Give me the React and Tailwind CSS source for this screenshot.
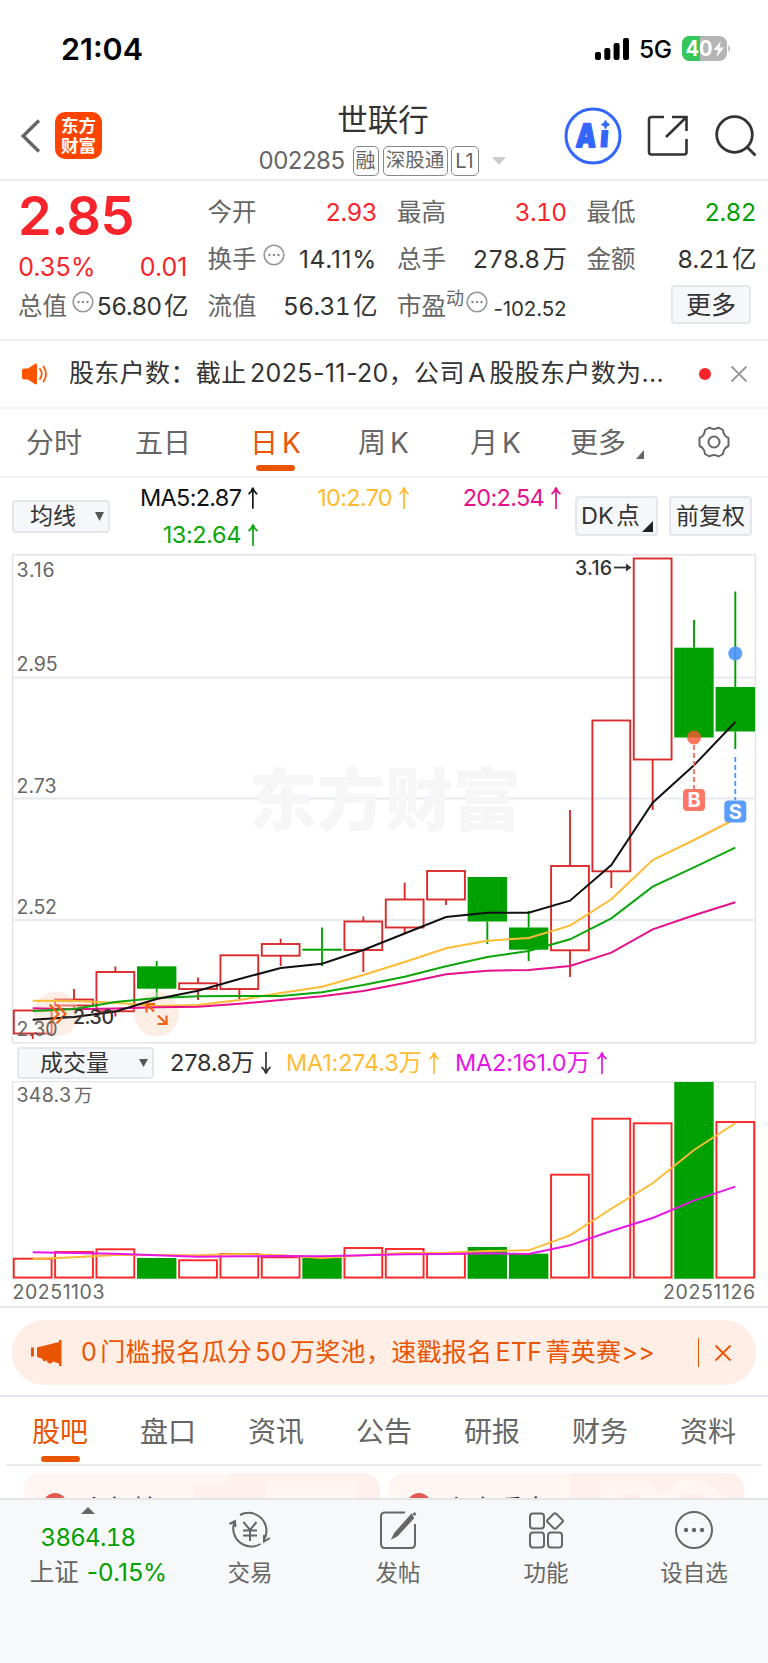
import React, { useState } from "react";
import clsx from "clsx";

const RED = "#d92b2b";
const GREEN = "#00a000";

// body top / bottom, wick high / low
const candles = [
  { top: 1010.5, bottom: 1033.5, high: 1010.5, low: 1039, up: true },
  { top: 999.5, bottom: 1005.5, high: 989, low: 1010, up: true },
  { top: 972, bottom: 1011.3, high: 966.5, low: 1016.5, up: true },
  { top: 966.3, bottom: 988.7, high: 961, low: 997, up: false },
  { top: 983.3, bottom: 989, high: 977.5, low: 1000, up: true },
  { top: 955.3, bottom: 989, high: 955.3, low: 999, up: true },
  { top: 944, bottom: 955.7, high: 938.7, low: 966, up: true },
  { top: 948.7, bottom: 950.7, high: 927.5, low: 966, up: false },
  { top: 921.5, bottom: 950, high: 916.5, low: 972, up: true },
  { top: 899.5, bottom: 927.5, high: 882.7, low: 933, up: true },
  { top: 871, bottom: 899.5, high: 871, low: 905, up: true },
  { top: 877, bottom: 921.5, high: 877, low: 944, up: false },
  { top: 927.5, bottom: 949.7, high: 911, low: 961, up: false },
  { top: 866, bottom: 950.3, high: 810, low: 977, up: true },
  { top: 720.5, bottom: 871.3, high: 720.5, low: 888, up: true },
  { top: 558.5, bottom: 759.5, high: 558.5, low: 810, up: true },
  { top: 647.7, bottom: 737.5, high: 620, low: 737.5, up: false },
  { top: 687, bottom: 731.5, high: 591.5, low: 749, up: false },
];

const priceLines = [
  {
    color: "#ffbb33",
    points: [1000.7, 1001, 1002.7, 1006, 1005, 1000, 993, 986.7, 975, 962, 948.3, 940.7, 938, 925.7, 899.3, 860, 840, 819],
  },
  {
    color: "#e6108c",
    points: [1008.3, 1009.3, 1008.5, 1007.3, 1006.7, 1003.7, 1000, 996.3, 991, 983, 974.3, 970.7, 970, 966, 952.7, 929.3, 915.3, 902.3],
  },
  {
    color: "#0aa60a",
    points: [1011, 1009, 1002, 998, 996.3, 996, 996, 992.3, 985, 976.7, 966.3, 957, 951, 939.3, 918.3, 886.7, 867.3, 847.7],
  },
  {
    color: "#111111",
    points: [1019.7, 1017, 1011.5, 999, 990.7, 979, 968, 963.7, 950, 933.5, 917, 912.7, 912.7, 900.7, 865, 802.7, 765.3, 722],
  },
];

const volumes = [
  1258.7, 1252, 1249.3, 1258, 1260.3, 1254, 1257.3, 1258, 1248, 1249, 1253.7, 1247, 1253.7, 1174.7, 1118.7, 1123.3, 1082, 1122,
];
const volumeDown = [3, 7, 11, 12, 16];

const volumeLines = [
  {
    color: "#ffbb33",
    points: [1259, 1257.3, 1255, 1255, 1255.3, 1254, 1255.3, 1258, 1255.3, 1253, 1252.7, 1251, 1250.3, 1235.3, 1208.7, 1183.3, 1150, 1123.3],
  },
  {
    color: "#e617e6",
    points: [1252.3, 1253, 1253.7, 1255.3, 1256.7, 1256.3, 1256, 1256.3, 1255.3, 1254.3, 1254, 1253.3, 1254, 1245.3, 1231, 1218, 1200.7, 1186.7],
  },
];

const centerX = (i) => 32.7 + i * 41.33;
const toPoints = (ys) => ys.map((y, i) => `${centerX(i)},${y}`).join(" ");

const Dots = ({ className }) => (
  <svg viewBox="0 0 22 22" className={clsx("h-[22px] w-[22px] shrink-0", className)}>
    <circle cx="11" cy="11" r="9.8" fill="none" stroke="#999" strokeWidth="1.6" />
    <circle cx="6.5" cy="11" r="1.2" fill="#888" />
    <circle cx="11" cy="11" r="1.2" fill="#888" />
    <circle cx="15.5" cy="11" r="1.2" fill="#888" />
  </svg>
);

const StatusBar = () => (
  <div className="flex h-[96px] items-start justify-between pl-[61px] pr-[36px] pt-[31px]">
    <span className="text-[30.5px] font-semibold leading-[36px] text-black">21:04</span>
    <div className="flex h-[36px] items-center">
      <svg viewBox="0 0 34 24" className="h-[24px] w-[34px]">
        <rect x="0" y="15" width="6" height="8" rx="2" />
        <rect x="9.3" y="11" width="6" height="12" rx="2" />
        <rect x="18.6" y="6" width="6" height="17" rx="2" />
        <rect x="28" y="1" width="6" height="22" rx="2" />
      </svg>
      <span className="ml-[10px] w-[33px] text-[24.5px] font-medium leading-[36px] tracking-[-0.5px] text-black">5G</span>
      <svg viewBox="0 0 50 26" className="ml-[10px] h-[26px] w-[50px]">
        <defs>
          <clipPath id="battery">
            <rect width="45" height="25" rx="7.5" />
          </clipPath>
        </defs>
        <g clipPath="url(#battery)">
          <rect width="45" height="25" fill="#b5b5b5" />
          <rect width="18" height="25" fill="#34c759" />
        </g>
        <path d="M46.5 9 Q49.5 12.5 46.5 16.5 Z" fill="#a5a5a5" />
        <text x="3.5" y="20" fontSize="21" fontWeight="700" fill="#fff" textLength="27" lengthAdjust="spacingAndGlyphs">
          40
        </text>
        <path d="M39 5 L31.5 14 H36 L34.5 21 L42 11.5 H37.3 Z" fill="#fff" />
      </svg>
    </div>
  </div>
);

const Header = () => (
  <header className="flex h-[85px] border-b-2 border-[#ededed]">
    <div className="flex w-[200px] items-start pl-[20px] pt-[16px]">
      <svg viewBox="0 0 22 36" className="mt-[6px] h-[36px] w-[22px]" fill="none" stroke="#666" strokeWidth="3.4">
        <path d="M19 2.5 L3.2 18 L19 33.5" />
      </svg>
      <div className="ml-[13px] flex h-[47px] w-[47px] flex-col items-center justify-center rounded-[10px] bg-[#ff4400] text-[17.5px] font-bold leading-[20px] text-white">
        <span>东方</span>
        <span>财富</span>
      </div>
    </div>
    <div className="flex flex-1 flex-col items-center">
      <h1 className="ml-[2px] mt-[5px] text-[30.5px] leading-[38px] text-[#333]">世联行</h1>
      <div className="mt-[7px] flex h-[30px] items-center text-[#666]">
        <span className="mr-[8px] text-[24px] leading-[30px] tracking-[-0.5px]">002285</span>
        <span className="mr-[4px] flex h-[30px] w-[26px] items-center justify-center rounded-[5px] border-[1.5px] border-[#888] text-[20px]">融</span>
        <span className="mr-[3px] flex h-[30px] w-[65px] items-center justify-center whitespace-nowrap rounded-[5px] border-[1.5px] border-[#888] text-[19.5px]">
          深股通
        </span>
        <span className="mr-[13px] flex h-[30px] w-[28px] items-center justify-center rounded-[5px] border-[1.5px] border-[#888] text-[20px]">L1</span>
        <svg viewBox="0 0 14 8" className="h-[8px] w-[14px]">
          <path d="M0 0 H14 L7 8 Z" fill="#ccc" />
        </svg>
      </div>
    </div>
    <div className="flex w-[204px] items-start pt-[11px]">
      <svg viewBox="0 0 58 58" className="h-[58px] w-[58px]">
        <circle cx="29" cy="29" r="27" fill="none" stroke="#3366ff" strokeWidth="3" />
        <g fill="#3366ff" stroke="#3366ff">
          <text transform="translate(11.5 40) skewX(-4)" fontSize="32" fontWeight="900" strokeWidth="1.8" strokeLinejoin="round" textLength="20" lengthAdjust="spacingAndGlyphs">
            A
          </text>
          <text transform="translate(35.5 40) skewX(-4)" fontSize="30" fontWeight="900" strokeWidth="1.2" textLength="8.5" lengthAdjust="spacingAndGlyphs">
            ı
          </text>
          <path d="M41.5 12.8 Q42.4 16.6 46 17.5 Q42.4 18.4 41.5 22.2 Q40.6 18.4 37 17.5 Q40.6 16.6 41.5 12.8 Z" strokeWidth="0.6" />
        </g>
      </svg>
      <svg viewBox="0 0 42 42" className="ml-[25px] mt-[8px] h-[42px] w-[42px]" fill="none" stroke="#333" strokeWidth="2.6">
        <path d="M17 2 H4.5 Q2 2 2 4.5 V37 Q2 39.5 4.5 39.5 H37 Q39.5 39.5 39.5 37 V24" />
        <path d="M25 2 H39.5 V16 M39 2.5 L19 22" />
      </svg>
      <svg viewBox="0 0 42 42" className="ml-[26px] mt-[8px] h-[42px] w-[42px]" fill="none" stroke="#333" strokeWidth="2.8">
        <circle cx="19.5" cy="19.5" r="17.8" />
        <path d="M32 32 L40.5 40.5" />
      </svg>
    </div>
  </header>
);

const QuoteCell = ({ label, extra, value, unit, valueClass, spacing }) => (
  <div className="flex h-[47px] items-center justify-between">
    <span className="flex shrink-0 items-center whitespace-nowrap text-[24.5px] text-[#666]">
      {label}
      {extra}
    </span>
    <span
      className={clsx(
        "flex gap-[3px] whitespace-nowrap text-[24.5px]",
        valueClass || "text-[#333]",
        spacing || "tabular-nums tracking-[-0.6px]"
      )}
    >
      {value}
      {unit && <span>{unit}</span>}
    </span>
  </div>
);

const Quote = () => (
  <section className="grid h-[160px] grid-cols-4 gap-x-[20px] border-b-2 border-[#f2f2f2] pl-[18px] pr-[12px] pt-[8px]">
    <div>
      <div className="h-[54px] text-[54px] font-semibold leading-[54px] tracking-[-0.5px] text-[#f8232b]">2.85</div>
      <div className="flex h-[48px] items-center justify-between text-[25px] leading-[48px] text-[#f8232b]">
        <span className="tabular-nums tracking-[-0.6px]">0.35%</span>
        <span>0.01</span>
      </div>
      <div className="-mt-[8px]">
        <QuoteCell label="总值" extra={<Dots className="mb-[9px] ml-[5px]" />} value="56.80" unit="亿" spacing="tabular-nums tracking-[-1.1px]" />
      </div>
    </div>
    <div>
      <QuoteCell label="今开" value="2.93" valueClass="text-[#f8232b]" />
      <QuoteCell label="换手" extra={<Dots className="mb-[9px] ml-[6px]" />} value="14.11%" spacing="tracking-[0.7px]" />
      <QuoteCell label="流值" value="56.31" unit="亿" />
    </div>
    <div>
      <QuoteCell label="最高" value="3.10" valueClass="text-[#f8232b]" />
      <QuoteCell label="总手" value="278.8" unit="万" />
      <div className="flex h-[47px] items-center justify-between">
        <span className="flex shrink-0 items-center whitespace-nowrap text-[24.5px] text-[#666]">
          市盈
          <span className="mb-[16px] text-[18px]">动</span>
          <Dots className="mb-[9px] ml-[2px]" />
        </span>
        <span className="mt-[5px] whitespace-nowrap text-[20.5px] tracking-[-0.1px] text-[#333]">-102.52</span>
      </div>
    </div>
    <div>
      <QuoteCell label="最低" value="2.82" valueClass="text-[#00a000]" />
      <QuoteCell label="金额" value="8.21" unit="亿" />
      <div className="flex justify-end pr-[5px] pt-[2px]">
        <button className="h-[39px] w-[80px] rounded-[4px] border-2 border-[#e3e6ec] bg-[#f6f7fa] text-[25px] leading-[36px] text-[#333]">
          更多
        </button>
      </div>
    </div>
  </section>
);

const Notice = () => (
  <section className="flex h-[68px] items-center border-b-2 border-[#f2f2f2] pl-[22px] pr-[20px]">
    <svg viewBox="0 0 26 22" className="h-[22px] w-[26px]">
      <path d="M0 7.5 Q0 5.5 2 5.5 H6 L13 0.8 Q15 0 15 2 V20 Q15 22 13 21.2 L6 16.5 H2 Q0 16.5 0 14.5 Z" fill="#ff5500" />
      <path d="M18 6 Q21.5 11 18 16 M21.5 3.5 Q26.5 11 21.5 18.5" fill="none" stroke="#ff5500" strokeWidth="1.8" strokeLinecap="round" />
    </svg>
    <span className="ml-[21px] w-[610px] whitespace-nowrap text-[25px] tracking-[0.37px] text-[#333] [word-spacing:-4px]">
      股东户数：截止 2025-11-20，公司 A 股股东户数为...
    </span>
    <span className="ml-[20px] h-[12px] w-[12px] rounded-full bg-[#f8232b]" />
    <svg viewBox="0 0 18 18" className="ml-auto h-[18px] w-[18px]" stroke="#999" strokeWidth="1.8">
      <path d="M1.5 1.5 L16.5 16.5 M16.5 1.5 L1.5 16.5" />
    </svg>
  </section>
);

const periods = [
  { name: "分时", width: "w-[109px]" },
  { name: "五日", width: "w-[115px]" },
  { name: "日 K", width: "w-[108px]" },
  { name: "周 K", width: "w-[112px]" },
  { name: "月 K", width: "w-[100px]" },
];

const PeriodTabs = () => {
  const [active, setActive] = useState("日 K");

  return (
    <nav className="flex h-[69px] items-start border-b-2 border-[#f2f2f2] pl-[26px] text-[28px] text-[#666]">
      {periods.map((p) => (
        <button key={p.name} onClick={() => setActive(p.name)} className={clsx("flex pt-[14px]", p.width)}>
          <span className="flex flex-col items-center">
            <span
              className={clsx("whitespace-nowrap leading-[40px] [word-spacing:-4px]", active === p.name && "text-[#ea5504]")}
            >
              {p.name}
            </span>
            {active === p.name && <span className="mt-[2px] h-[6px] w-[39px] rounded-[3px] bg-[#ea5504]" />}
          </span>
        </button>
      ))}
      <button className="flex items-end pt-[14px] leading-[40px]">
        更多
        <svg viewBox="0 0 8 9" className="mb-[4px] ml-[10px] h-[9px] w-[8px]">
          <path d="M8 0 V9 H0 Z" fill="#666" />
        </svg>
      </button>
      <svg viewBox="0 0 32 32" className="ml-[54px] mt-[17px] h-[32px] w-[32px]" fill="none" stroke="#666" strokeWidth="2" strokeLinejoin="round">
        <path d="M11.5 1.5 Q13.5 3 16 3 Q18.5 3 20.5 1.5 L25 4 Q25.2 6.8 26.5 8.7 Q27.8 10.8 30.5 12 V20 Q27.8 21.2 26.5 23.3 Q25.2 25.2 25 28 L20.5 30.5 Q18.5 29 16 29 Q13.5 29 11.5 30.5 L7 28 Q6.8 25.2 5.5 23.3 Q4.2 21.2 1.5 20 V12 Q4.2 10.8 5.5 8.7 Q6.8 6.8 7 4 Z" />
        <circle cx="16" cy="16" r="5.5" />
      </svg>
    </nav>
  );
};

const Arrow = ({ down }) => (
  <svg viewBox="0 0 12 24" className={clsx("ml-[6px] h-[24px] w-[12px]", down && "rotate-180")} fill="none" stroke="currentColor" strokeWidth="1.7">
    <path d="M6 23 V2 M1.5 8 Q5 5.5 6 1.5 Q7 5.5 10.5 8" />
  </svg>
);

const Average = ({ text, className, down }) => (
  <span className={clsx("flex items-center whitespace-nowrap text-[23.5px] leading-[36px]", className)}>
    {text}
    <Arrow down={down} />
  </span>
);

const AverageBar = () => (
  <section className="flex h-[76px] items-start pl-[12px] pr-[16px]">
    <button className="mt-[22px] flex h-[33px] w-[98px] items-center justify-between rounded-[4px] border-2 border-[#e3e6ec] bg-[#f6f7fa] pl-[16px] pr-[4px] text-[23px] text-[#333]">
      均线
      <svg viewBox="0 0 9 9" className="h-[9px] w-[9px]">
        <path d="M0 0 H9 L4.5 9 Z" fill="#555" />
      </svg>
    </button>
    <div className="ml-[30px] mt-[2px] grid w-[423px] grid-cols-[119px_151px_152px] tracking-[-0.7px]">
      <Average text="MA5:2.87" className="justify-end text-[#111]" />
      <Average text="10:2.70" className="justify-end text-[#ffbb33]" />
      <Average text="20:2.54" className="justify-end text-[#e6108c]" />
      <Average text="13:2.64" className="h-[38px] justify-end tracking-[-0.4px] text-[#0aa60a]" />
    </div>
    <button className="ml-auto mt-[18px] flex h-[40px] w-[83px] shrink-0 items-end justify-between rounded-[4px] border-2 border-[#e3e6ec] bg-[#f6f7fa] pl-[4px] text-[23.5px] leading-[37px] text-[#333]">
      <span className="whitespace-nowrap [word-spacing:-4px]">DK 点</span>
      <svg viewBox="0 0 11 11" className="-ml-[4px] mb-[2px] mr-[3px] h-[11px] w-[11px] shrink-0">
        <path d="M11 0 V11 H0 Z" fill="#222" />
      </svg>
    </button>
    <button className="ml-[11px] mt-[18px] h-[40px] w-[83px] shrink-0 rounded-[4px] border-2 border-[#e3e6ec] bg-[#f6f7fa] text-[23px] leading-[37px] text-[#333]">
      前复权
    </button>
  </section>
);

const PriceChart = () => (
  <svg viewBox="0 554 768 490" className="block h-[490px] w-full">
    <rect x="12.5" y="554.8" width="743" height="488" fill="none" stroke="#e2e3e8" strokeWidth="1.5" />
    {[677.5, 798.5, 920].map((y) => (
      <line key={y} x1="12.5" x2="755.5" y1={y} y2={y} stroke="#e6eaf0" strokeWidth="2" />
    ))}
    <text x="249" y="825" fontSize="68" fontWeight="900" fill="#f6f6f6" textLength="272">
      东方财富
    </text>

    {candles.map((c, i) => {
      const x = centerX(i);
      const color = c.up ? RED : GREEN;
      return (
        <g key={i} stroke={color} strokeWidth="1.9">
          <line x1={x} x2={x} y1={c.high} y2={c.top} />
          <line x1={x} x2={x} y1={c.bottom} y2={c.low} />
          {c.up ? (
            <rect x={x - 18.9} y={c.top} width="37.8" height={c.bottom - c.top} fill="none" />
          ) : (
            <rect x={x - 19.7} y={c.top} width="39.4" height={c.bottom - c.top} fill={color} stroke="none" />
          )}
        </g>
      );
    })}

    {/* expand / fullscreen handles, translucent over the candles */}
    <circle cx="56" cy="1014" r="22.5" fill="#fbd9c6" fillOpacity="0.45" />
    <circle cx="156.5" cy="1014" r="22.5" fill="#fbd9c6" fillOpacity="0.45" />

    {priceLines.map((line) => (
      <polyline key={line.color} points={toPoints(line.points)} fill="none" stroke={line.color} strokeWidth="2" />
    ))}

    <g fill="none" stroke="#f26010" strokeWidth="2.2">
      <path d="M49.5 1004.5 L58.5 1014 L49.5 1023.5 M56.5 1004.5 L65.5 1014 L56.5 1023.5" />
      <path d="M155 1004 H146.5 V1012.5 M147 1004.5 L154 1011.5 M158 1015.5 L166 1023.5 M157.5 1024 H166.5 V1015.5" />
    </g>

    <g fontSize="19.5" fill="#666">
      <text x="16.5" y="576.5" textLength="38">3.16</text>
      <text x="16.5" y="671" textLength="41">2.95</text>
      <text x="16.5" y="793" textLength="40">2.73</text>
      <text x="16.5" y="914" textLength="40.5">2.52</text>
      <text x="16.5" y="1035.5" textLength="41">2.30</text>
    </g>

    <g fontSize="19.5" fontWeight="500" fill="#333">
      <text x="575" y="574.5" textLength="37">3.16</text>
      <text x="73" y="1024" textLength="41">2.30</text>
    </g>
    <path d="M614 567.5 H629" stroke="#333" strokeWidth="1.8" />
    <path d="M626 563.5 L631.5 567.5 L626 571.5 Z" fill="#333" />
    <path d="M62 1017 H72" stroke="#333" strokeWidth="1.8" />

    <line x1="694" x2="694" y1="745" y2="789" stroke="#ff6b5b" strokeWidth="1.8" strokeDasharray="5 3" />
    <circle cx="694" cy="737.5" r="7" fill="#ff5533" fillOpacity="0.8" />
    <rect x="683" y="789" width="22" height="22" rx="4" fill="#ff7766" />
    <text x="694" y="807" fontSize="20" fontWeight="700" fill="#fff" textAnchor="middle">B</text>

    <line x1="735.3" x2="735.3" y1="757" y2="800" stroke="#4d94ff" strokeWidth="1.8" strokeDasharray="5 3" />
    <circle cx="735.3" cy="653.5" r="7" fill="#4d94ff" fillOpacity="0.9" />
    <rect x="724.3" y="800.5" width="22" height="22" rx="4" fill="#5a9dff" />
    <text x="735.3" y="818.5" fontSize="20" fontWeight="700" fill="#fff" textAnchor="middle">S</text>
  </svg>
);

const VolumeBar = () => (
  <section className="flex h-[37px] items-center pl-[17px] pt-[1px]">
    <button className="flex h-[32px] w-[137px] items-center justify-between rounded-[4px] border-2 border-[#e3e6ec] bg-[#f6f7fa] pl-[21px] pr-[4px] text-[23px] text-[#333]">
      成交量
      <svg viewBox="0 0 9 8" className="h-[8px] w-[9px]">
        <path d="M0 0 H9 L4.5 8 Z" fill="#555" />
      </svg>
    </button>
    <Average text="278.8万" className="ml-[16px] w-[116px] tracking-[-0.2px] text-[#333]" down />
    <Average text="MA1:274.3万" className="w-[169px] tracking-[-0.2px] text-[#ffbb33]" />
    <Average text="MA2:161.0万" className="tracking-[-0.2px] text-[#e617e6]" />
  </section>
);

const VolumeChart = () => (
  <div className="h-[227px] border-b-2 border-[#e8e8ea]">
    <svg viewBox="0 1081 768 225" className="block h-[225px] w-full">
      <rect x="12.5" y="1081.7" width="743" height="197" fill="none" stroke="#e2e3e8" strokeWidth="1.2" />
      {volumes.map((y, i) =>
        volumeDown.includes(i) ? (
          <rect key={i} x={centerX(i) - 19.7} y={y} width="39.4" height={1278.7 - y} fill={GREEN} />
        ) : (
          <rect key={i} x={centerX(i) - 18.9} y={y} width="37.8" height={1277.5 - y} fill="none" stroke="#fb2626" strokeWidth="1.9" />
        )
      )}
      {volumeLines.map((line) => (
        <polyline key={line.color} points={toPoints(line.points)} fill="none" stroke={line.color} strokeWidth="1.9" />
      ))}
      <g fontSize="19.5" fill="#666">
        <text x="16.5" y="1101.5" textLength="54.5">348.3</text>
        <text x="74" y="1101.5" fontSize="18.5">万</text>
        <text x="12.5" y="1299" textLength="92">20251103</text>
        <text x="663" y="1299" textLength="92">20251126</text>
      </g>
    </svg>
  </div>
);

const Banner = () => (
  <section className="h-[89px] border-b-2 border-[#e6e6ec] px-[12px] pt-[12px]">
    <div className="flex h-[65px] items-center rounded-[32px] bg-[#feeee6] pl-[19px] pr-[24px] text-[#ea5504]">
      <svg viewBox="0 0 31 26" className="h-[26px] w-[31px]" fill="#ea5504">
        <rect x="0" y="7.5" width="3" height="9" />
        <path d="M6 7.5 L28 2 V0 H30.5 V26 H28 V23.5 L22 21.5 Q20 25 16.5 22.5 L15.5 20 Q13 23 11 18.5 L6 17 Z" />
      </svg>
      <span className="ml-[19px] whitespace-nowrap text-[25px] tracking-[0.27px] [word-spacing:-4px]">
        0 门槛报名瓜分 50 万奖池，速戳报名 ETF 菁英赛&gt;&gt;
      </span>
      <span className="ml-auto mr-[15px] h-[29px] w-[1.5px] bg-[#ea5504]" />
      <svg viewBox="0 0 18 18" className="h-[18px] w-[18px]" stroke="#ea5504" strokeWidth="1.8">
        <path d="M1.5 1.5 L16.5 16.5 M16.5 1.5 L1.5 16.5" />
      </svg>
    </div>
  </section>
);

const sections = ["股吧", "盘口", "资讯", "公告", "研报", "财务", "资料"];

const SectionTabs = () => {
  const [active, setActive] = useState("股吧");

  return (
    <nav className="mx-[6px] flex h-[69px] items-start justify-between border-b-2 border-[#ececec] pl-[26px] pr-[26px] text-[28px] text-[#666]">
      {sections.map((name) => (
        <button key={name} onClick={() => setActive(name)} className="flex flex-col items-center pt-[15px]">
          <span className={clsx("leading-[40px]", active === name && "text-[#ea5504]")}>{name}</span>
          {active === name && <span className="mt-[4px] h-[6px] w-[39px] rounded-[3px] bg-[#ea5504]" />}
        </button>
      ))}
    </nav>
  );
};

const HotCard = ({ title, children }) => (
  <div className="relative h-[90px] flex-1 overflow-hidden rounded-[16px] bg-[#fff6f4]">
    <svg viewBox="0 0 356 90" className="absolute inset-0 h-full w-full">
      {children}
    </svg>
    <div className="relative flex items-start pl-[19px] pt-[19px]">
      <span className="mt-[1px] h-[24px] w-[24px] rounded-full bg-[#e05a52]" />
      <span className="ml-[14px] text-[26px] leading-[36px] text-[#222]">{title}</span>
    </div>
  </div>
);

const Cards = () => (
  <section className="flex h-[32px] gap-[8px] overflow-hidden px-[24px] pt-[7px]">
    <HotCard title="人气榜">
      <path d="M205 0 H356 V90 H170 V12 H205 Z" fill="#fff0ee" />
      <rect x="242" y="8" width="90" height="82" fill="#fff6f4" />
    </HotCard>
    <HotCard title="主力看盘">
      <path d="M182 0 H356 V90 H182 Z" fill="#fff0ee" />
      <path d="M213 8 H258 L275 22 L290 8 Q325 2 342 32 L330 90 H213 Z" fill="#fff6f4" />
      <path d="M233 22 H251 V60 H233 Z M288 25 Q300 18 318 24 V50 H288 Z" fill="#ffecea" />
    </HotCard>
  </section>
);

const NavItem = ({ label, children }) => (
  <button className="flex flex-1 flex-col items-center pt-[10px]">
    <svg viewBox="0 0 42 40" className="h-[40px] w-[42px]" fill="none" stroke="#666" strokeWidth="2">
      {children}
    </svg>
    <span className="mt-[6px] text-[22.5px] leading-[34px] text-[#666]">{label}</span>
  </button>
);

const BottomBar = () => (
  <footer className="flex h-[165px] border-t-2 border-[#e4e5e7] bg-[#f7f8fa]">
    <div className="flex w-[176px] flex-col items-center pt-[7px]">
      <svg viewBox="0 0 14 7" className="h-[7px] w-[14px]">
        <path d="M7 0 L14 7 H0 Z" fill="#666" />
      </svg>
      <span className="mt-[8px] text-[24px] leading-[32px] tabular-nums tracking-[-0.7px] text-[#00a000]">3864.18</span>
      <span className="mt-[1px] flex gap-[8px] pl-[21px] text-[24.5px] leading-[34px] text-[#666]">
        上证
        <span className="tracking-[0.1px] text-[#00a000]">-0.15%</span>
      </span>
    </div>
    <NavItem label="交易">
      <path d="M11 5 A18 18 0 0 1 35 30 M31.5 34 A18 18 0 0 1 5.5 12" />
      <path d="M0.5 14 L6 11 L6.5 17 M35 25 V31.5 L41 28" />
      <path d="M14.5 12 L21 20 L27.5 12 M21 20 V31 M14 20.5 H28 M14 25.5 H28" />
    </NavItem>
    <NavItem label="发帖">
      <path d="M28 2.5 H8 Q4 2.5 4 6.5 V34 Q4 38 8 38 H34 Q38 38 38 34 V14" />
      <path d="M34.5 5 L18 23.5 L16 27.5 L20 25.5 L36 8 Z" fill="#666" />
      <path d="M36.5 3 L38.5 5" strokeWidth="3" />
    </NavItem>
    <NavItem label="功能">
      <rect x="5" y="3.5" width="14" height="15" rx="3" />
      <rect x="5" y="22.5" width="14" height="15" rx="3" />
      <rect x="23" y="22.5" width="14" height="15" rx="3" />
      <path d="M28.5 4 Q30 2.5 31.5 4 L37.5 10 Q38.5 11 37.5 12 L31.5 18 Q30 19.5 28.5 18 L22.5 12 Q21.5 11 22.5 10 Z" />
    </NavItem>
    <NavItem label="设自选">
      <circle cx="21" cy="20" r="18" />
      <g fill="#666" stroke="none">
        <circle cx="13" cy="20" r="2.2" />
        <circle cx="21" cy="20" r="2.2" />
        <circle cx="29" cy="20" r="2.2" />
      </g>
    </NavItem>
  </footer>
);

const App = () => {
  return (
    <div className="h-[1663px] w-[768px] overflow-hidden bg-white font-['Inter','Noto_Sans_CJK_SC',sans-serif]">
      <StatusBar />
      <Header />
      <Quote />
      <Notice />
      <PeriodTabs />
      <AverageBar />
      <PriceChart />
      <VolumeBar />
      <VolumeChart />
      <Banner />
      <SectionTabs />
      <Cards />
      <BottomBar />
    </div>
  );
};

export default App;
